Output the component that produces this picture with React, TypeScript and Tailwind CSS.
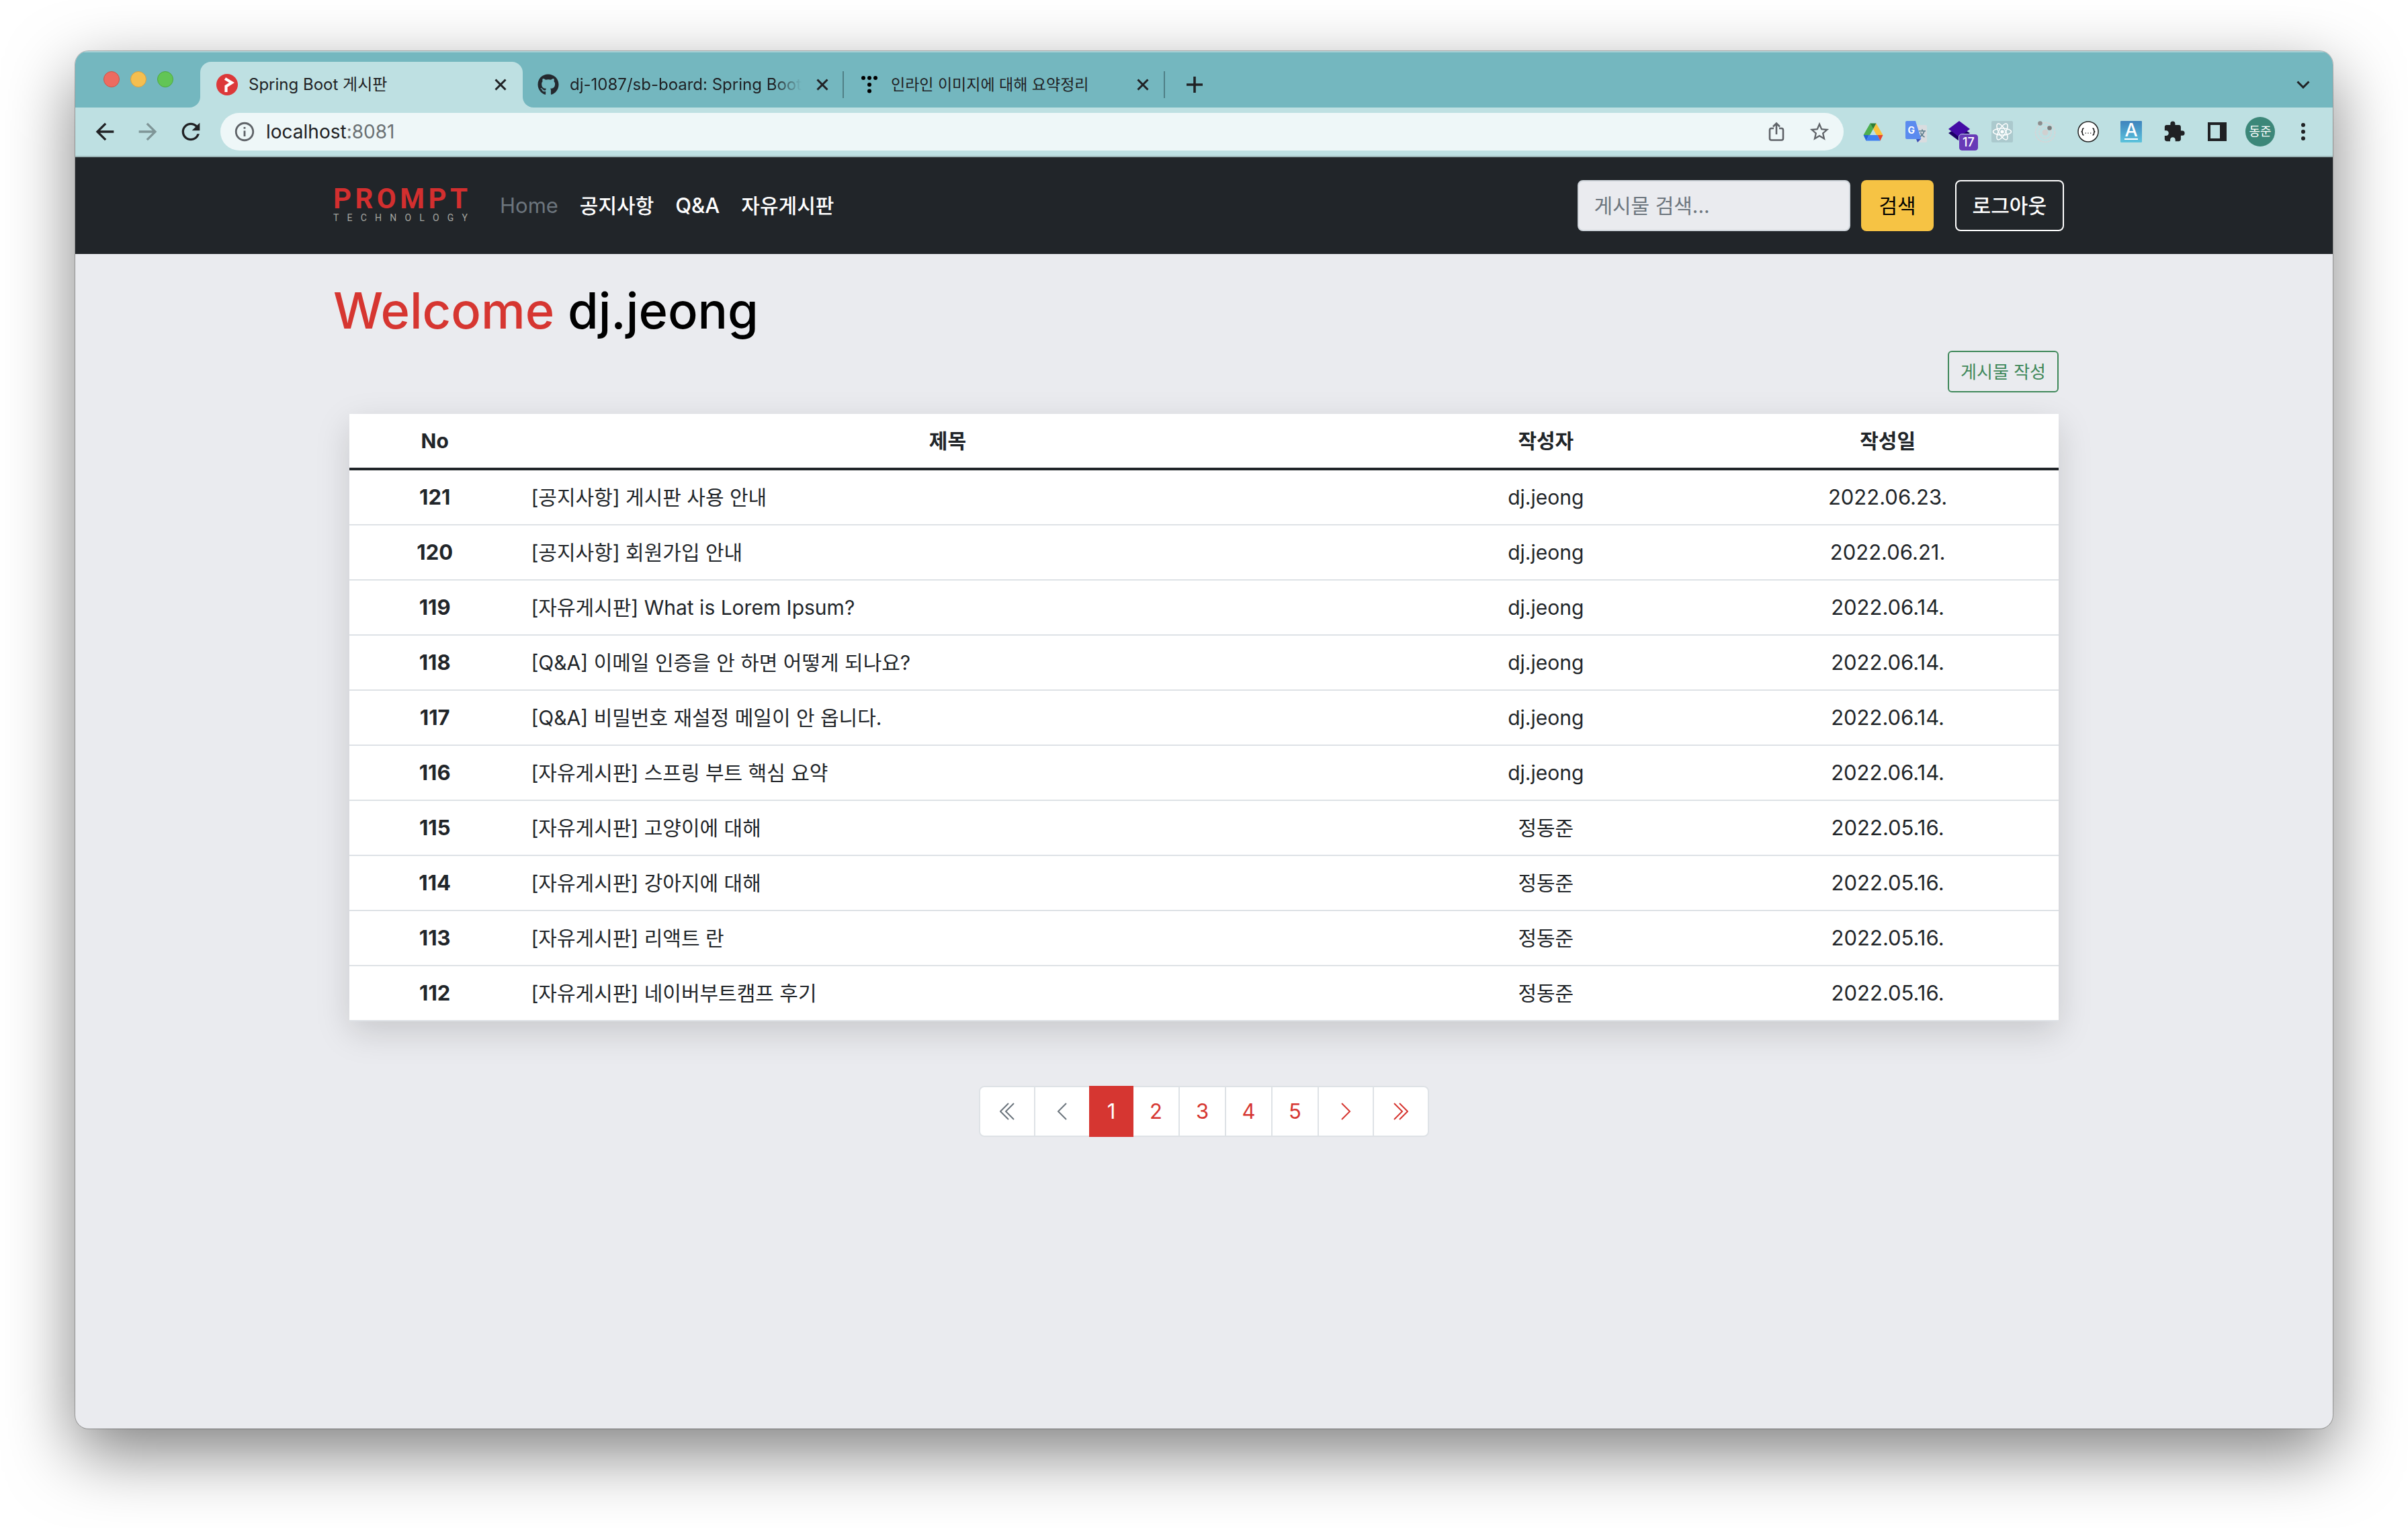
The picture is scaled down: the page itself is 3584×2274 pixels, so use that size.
import type { ReactNode } from "react";
import { FaGithub } from "react-icons/fa";
import {
  MdArrowBack,
  MdArrowForward,
  MdExtension,
  MdInfoOutline,
  MdRefresh,
  MdStarBorder,
} from "react-icons/md";

type Post = { no: number; title: string; author: string; date: string };

const posts: Post[] = [
  { no: 121, title: "[공지사항] 게시판 사용 안내", author: "dj.jeong", date: "2022.06.23." },
  { no: 120, title: "[공지사항] 회원가입 안내", author: "dj.jeong", date: "2022.06.21." },
  { no: 119, title: "[자유게시판] What is Lorem Ipsum?", author: "dj.jeong", date: "2022.06.14." },
  { no: 118, title: "[Q&A] 이메일 인증을 안 하면 어떻게 되나요?", author: "dj.jeong", date: "2022.06.14." },
  { no: 117, title: "[Q&A] 비밀번호 재설정 메일이 안 옵니다.", author: "dj.jeong", date: "2022.06.14." },
  { no: 116, title: "[자유게시판] 스프링 부트 핵심 요약", author: "dj.jeong", date: "2022.06.14." },
  { no: 115, title: "[자유게시판] 고양이에 대해", author: "정동준", date: "2022.05.16." },
  { no: 114, title: "[자유게시판] 강아지에 대해", author: "정동준", date: "2022.05.16." },
  { no: 113, title: "[자유게시판] 리액트 란", author: "정동준", date: "2022.05.16." },
  { no: 112, title: "[자유게시판] 네이버부트캠프 후기", author: "정동준", date: "2022.05.16." },
];

function CloseIcon() {
  return (
    <svg viewBox="0 0 18 18" className="size-[18px]" fill="none" stroke="#202124" strokeWidth="3">
      <path d="M1.5 1.5l15 15M16.5 1.5l-15 15" />
    </svg>
  );
}

function BoardFavicon() {
  return (
    <svg viewBox="0 0 32 32" className="size-8 shrink-0">
      <circle cx="16" cy="16" r="16" fill="#dc3839" />
      <path d="M13 7l10 6-8.500 5.500V27" fill="none" stroke="#fff" strokeWidth="4.200" />
    </svg>
  );
}

function DotsFavicon() {
  return (
    <svg viewBox="0 0 24 26" className="h-[26px] w-6 shrink-0" fill="#000">
      <circle cx="3" cy="3" r="3" />
      <circle cx="12" cy="3" r="3" />
      <circle cx="21" cy="3" r="3" />
      <circle cx="12" cy="13" r="3" />
      <circle cx="12" cy="22.500" r="3" />
    </svg>
  );
}

function ShareIcon() {
  return (
    <svg viewBox="0 0 24 30" className="h-[30px] w-6" fill="none" stroke="#5f6368" strokeWidth="2.600">
      <path d="M8 10H4.500a2.500 2.500 0 0 0-2.500 2.500V25a2.500 2.500 0 0 0 2.500 2.500h15A2.500 2.500 0 0 0 22 25V12.500a2.500 2.500 0 0 0-2.500-2.500H16" />
      <path d="M12 19V3M7 7.500l5-5 5 5" />
    </svg>
  );
}

function DriveIcon() {
  return (
    <svg viewBox="0 0 30 27" className="h-[27px] w-[30px]">
      <path d="M10.500 0.500L0.500 18H10l5-9z" fill="#4caf50" />
      <path d="M19.500 0.500l10 17.500H20l-5-9z" fill="#fbc13c" />
      <path d="M10.500 0.500h9L15 9z" fill="#2e7d32" />
      <path d="M0.500 18H9l-4.500 8.500z" fill="#2563d8" />
      <path d="M9 18h12.500l4 8.500h-21z" fill="#3f7ff0" />
      <path d="M21.500 18h8l-4 8.500z" fill="#e5432e" />
    </svg>
  );
}

function TranslateIcon() {
  return (
    <svg viewBox="0 0 32 32" className="size-8">
      <path d="M12 6h18a2 2 0 0 1 2 2v22a2 2 0 0 1-2 2H18z" fill="#d9dcdf" />
      <path
        d="M20 15h10M25 12.500V15M28 15c-1 4-4 7-7 9M22.500 17c1 3 3 5.500 6 7"
        fill="none"
        stroke="#5b7d8c"
        strokeWidth="1.600"
      />
      <path d="M16 27h7l-5 5z" fill="#3b50b5" />
      <path d="M2 0h13l8.500 27H2a2 2 0 0 1-2-2V2a2 2 0 0 1 2-2z" fill="#5b8bef" />
      <text x="3.500" y="18.500" fontFamily="Inter" fontWeight="700" fontSize="14" fill="#fff">
        G
      </text>
    </svg>
  );
}

function LayersIcon() {
  return (
    <span className="relative block size-8">
      <svg viewBox="0 0 32 32" className="size-8">
        <path d="M0 18l5-3 11 7 11-7 5 3-16 12z" fill="#1d0068" />
        <path d="M16 0l16 12-16 12L0 12z" fill="#440ba5" />
      </svg>
      <span className="absolute top-5 left-4 flex h-6 w-7 items-center justify-center rounded bg-[#673ab7] text-lg leading-6 font-medium text-white outline-1 outline-[#bee0e2]">
        17
      </span>
    </span>
  );
}

function AtomIcon() {
  return (
    <svg viewBox="0 0 32 32" className="size-8" fill="none" stroke="#fff" strokeWidth="1.500">
      <rect width="32" height="32" rx="2" fill="#abc9cd" stroke="none" />
      <ellipse cx="16" cy="16" rx="13.500" ry="5" />
      <ellipse cx="16" cy="16" rx="13.500" ry="5" transform="rotate(60 16 16)" />
      <ellipse cx="16" cy="16" rx="13.500" ry="5" transform="rotate(120 16 16)" />
      <circle cx="16" cy="16" r="2.600" fill="#fff" stroke="none" />
    </svg>
  );
}

function OrbitIcon() {
  return (
    <svg viewBox="0 0 32 32" className="size-8" fill="none" stroke="#d9d3d5" strokeWidth="1.600">
      <circle cx="16" cy="17" r="14.500" strokeDasharray="3 1" />
      <circle cx="16" cy="17" r="9" strokeDasharray="3 1" />
      <circle cx="16" cy="17" r="4.500" fill="#d0d0d0" stroke="none" />
      <circle cx="8.500" cy="3.500" r="3.300" fill="#8d8d8d" stroke="none" />
      <circle cx="22.500" cy="10.500" r="3.300" fill="#7c7c7c" stroke="none" />
    </svg>
  );
}

function BracesIcon() {
  return (
    <svg viewBox="0 0 32 32" className="size-8">
      <circle cx="16" cy="16" r="15" fill="#fff" stroke="#222" strokeWidth="1.500" />
      <path
        d="M9.500 11c-2 0-2 .8-2 2.300 0 1.700-.3 2.700-1.800 2.700 1.500 0 1.800 1 1.800 2.700 0 1.500 0 2.300 2 2.300M22.500 11c2 0 2 .8 2 2.300 0 1.700.3 2.700 1.800 2.700-1.500 0-1.800 1-1.800 2.700 0 1.500 0 2.300-2 2.300"
        fill="none"
        stroke="#111"
        strokeWidth="1.500"
      />
      <path d="M11.700 18.200h1.200M15.400 18.200h1.200M19.100 18.200h1.200" stroke="#111" strokeWidth="1.200" />
    </svg>
  );
}

function LetterIcon() {
  return (
    <span className="flex size-8 flex-col items-center rounded-[1px] bg-linear-to-b from-[#3f83bd] to-[#5cc3dc]">
      <span className="h-[26px] text-[27px] leading-[28px] font-medium text-white">A</span>
      <span className="h-0.5 w-5 bg-white" />
    </span>
  );
}

function SidePanelIcon() {
  return (
    <svg viewBox="0 0 28 28" className="size-7">
      <path d="M0 0h28v28H0zM4 4v20h14V4z" fill="#202124" fillRule="evenodd" />
    </svg>
  );
}

function KebabIcon() {
  return (
    <svg viewBox="0 0 28 28" className="size-7" fill="#202124">
      <circle cx="14" cy="4" r="3" />
      <circle cx="14" cy="14" r="3" />
      <circle cx="14" cy="24" r="3" />
    </svg>
  );
}

function Chevrons({ double = false, right = false }: { double?: boolean; right?: boolean }) {
  const single = right ? "M2 2l12 12L2 26" : "M14 2L2 14l12 12";
  const pair = right ? "M1 2l12 12L1 26M9 2l12 12L9 26" : "M13 2L1 14l12 12M21 2L9 14l12 12";
  return (
    <svg
      viewBox={double ? "0 0 22 28" : "0 0 16 28"}
      className={double ? "h-7 w-[22px]" : "h-7 w-4"}
      fill="none"
      stroke="currentColor"
      strokeWidth="2"
    >
      <path d={double ? pair : single} />
    </svg>
  );
}

function ToolButton({ label, children }: { label: string; children: ReactNode }) {
  return (
    <button type="button" aria-label={label} className="flex h-14 w-16 shrink-0 items-center justify-center">
      {children}
    </button>
  );
}

function TabStrip() {
  return (
    <div className="flex h-21 items-end border-t-2 border-[#a9d3d8] bg-[#74b7bf] pr-3 text-2xl leading-8 text-[#202124]">
      <div className="flex h-20 w-[186px] shrink-0 items-center gap-4 pb-1 pl-[42px]">
        <span className="size-6 rounded-full border border-[#cf5347] bg-[#ed6b60]" />
        <span className="size-6 rounded-full border border-[#d9a03f] bg-[#f5bf4f]" />
        <span className="size-6 rounded-full border border-[#4ea73f] bg-[#62c555]" />
      </div>
      <div className="relative flex h-17 w-[480px] items-center rounded-t-2xl bg-[#bee0e2] pr-6 pl-6">
        <span className="absolute bottom-0 -left-4 size-4 bg-[#bee0e2]">
          <span className="block size-4 rounded-br-2xl bg-[#74b7bf]" />
        </span>
        <span className="absolute -right-4 bottom-0 size-4 bg-[#bee0e2]">
          <span className="block size-4 rounded-bl-2xl bg-[#74b7bf]" />
        </span>
        <BoardFavicon />
        <span className="ml-4 flex-1 truncate">Spring Boot 게시판</span>
        <button type="button" aria-label="탭 닫기">
          <CloseIcon />
        </button>
      </div>
      <div className="flex h-17 w-[476px] items-center pr-[21px] pl-[22px]">
        <FaGithub className="size-8 shrink-0 text-[#24292f]" />
        <span className="ml-4 mask-r-from-88% mask-r-to-100% whitespace-nowrap">
          dj-1087/sb-board: Spring Boot
        </span>
        <button type="button" aria-label="탭 닫기" className="ml-auto">
          <CloseIcon />
        </button>
      </div>
      <div className="flex h-17 w-[480px] items-center">
        <span className="h-10 w-0.5 bg-[#4f7f86]" />
        <span className="ml-[26px]">
          <DotsFavicon />
        </span>
        <span className="ml-5 flex-1 truncate text-[23px]">인라인 이미지에 대해 요약정리</span>
        <button type="button" aria-label="탭 닫기" className="mr-[22px]">
          <CloseIcon />
        </button>
        <span className="h-10 w-0.5 bg-[#4f7f86]" />
      </div>
      <button type="button" aria-label="새 탭" className="flex h-17 w-[88px] items-center justify-center">
        <svg viewBox="0 0 24 24" className="size-6" stroke="#202124" strokeWidth="3.600">
          <path d="M12 0v24M0 12h24" />
        </svg>
      </button>
      <button type="button" aria-label="탭 검색" className="ml-auto flex h-17 w-16 items-center justify-center">
        <svg viewBox="0 0 20 12" className="h-3 w-5" fill="none" stroke="#202124" strokeWidth="3">
          <path d="M1.500 1.500L10 10l8.500-8.500" />
        </svg>
      </button>
    </div>
  );
}

function Toolbar() {
  return (
    <div className="flex h-[74px] items-center border-b-2 border-[#9bb4b6] bg-[#bee0e2] pr-3 pl-3">
      <ToolButton label="뒤로">
        <MdArrowBack className="size-10 text-[#202124]" />
      </ToolButton>
      <ToolButton label="앞으로">
        <MdArrowForward className="size-10 text-[#7f9597]" />
      </ToolButton>
      <ToolButton label="새로고침">
        <MdRefresh className="size-10 text-[#202124]" />
      </ToolButton>
      <div className="ml-3 flex h-14 flex-1 items-center rounded-full bg-[#eef7f8] pr-1 pl-[19px]">
        <MdInfoOutline className="size-[34px] text-[#5f6368]" />
        <span className="ml-[15px] flex-1 text-[28px] leading-10 text-[#202124]">
          localhost<span className="text-[#6b7174]">:8081</span>
        </span>
        <ToolButton label="공유">
          <ShareIcon />
        </ToolButton>
        <ToolButton label="북마크">
          <MdStarBorder className="size-[34px] text-[#5f6368]" />
        </ToolButton>
      </div>
      <div className="ml-3 flex">
        <ToolButton label="Drive">
          <DriveIcon />
        </ToolButton>
        <ToolButton label="번역">
          <TranslateIcon />
        </ToolButton>
        <ToolButton label="레이어">
          <LayersIcon />
        </ToolButton>
        <ToolButton label="React">
          <AtomIcon />
        </ToolButton>
        <ToolButton label="궤도">
          <OrbitIcon />
        </ToolButton>
        <ToolButton label="JSON">
          <BracesIcon />
        </ToolButton>
        <ToolButton label="글꼴">
          <LetterIcon />
        </ToolButton>
        <ToolButton label="확장 프로그램">
          <MdExtension className="size-[34px] text-[#202124]" />
        </ToolButton>
        <ToolButton label="측면 패널">
          <SidePanelIcon />
        </ToolButton>
        <ToolButton label="프로필">
          <span className="flex size-11 items-center justify-center rounded-full bg-[#3c8779] text-lg text-white">
            동준
          </span>
        </ToolButton>
        <ToolButton label="메뉴">
          <KebabIcon />
        </ToolButton>
      </div>
    </div>
  );
}

function Logo() {
  return (
    <a href="/" aria-label="PROMPT TECHNOLOGY" className="block w-[200px] font-[Roboto,sans-serif]">
      <span className="flex justify-between text-[42px] leading-8 font-bold text-[#d32f2f]">
        {["P", "R", "O", "M", "P", "T"].map((letter, i) => (
          <span key={i}>{letter}</span>
        ))}
      </span>
      <span className="mt-1 flex justify-between text-sm leading-4 text-[#a5a5a0]">
        {["T", "E", "C", "H", "N", "O", "L", "O", "G", "Y"].map((letter, i) => (
          <span key={i}>{letter}</span>
        ))}
      </span>
    </a>
  );
}

function Navbar() {
  return (
    <header className="bg-[#212529]">
      <div className="mx-auto flex h-36 max-w-[2640px] items-center pr-10 pl-6">
        <Logo />
        <nav className="ml-12 flex items-center gap-8 leading-12 text-white">
          <a href="/" className="text-[31px] text-[#6c757d]">
            Home
          </a>
          <a href="/notice" className="font-medium">
            공지사항
          </a>
          <a href="/qna" className="text-[31px] font-medium">
            Q&amp;A
          </a>
          <a href="/free" className="font-medium">
            자유게시판
          </a>
        </nav>
        <form className="ml-auto flex items-center" role="search">
          <input
            type="search"
            aria-label="게시물 검색"
            placeholder="게시물 검색..."
            className="h-19 w-[406px] rounded-lg border-2 border-[#ced4da] bg-[#eaebef] px-[22px] placeholder:text-[#6c757d]"
          />
          <button type="button" className="ml-4 h-19 rounded-lg bg-[#f6c344] px-[26px] text-black">
            검색
          </button>
        </form>
        <button type="button" className="ml-8 h-19 rounded-lg border-2 border-white px-6 font-medium text-white">
          로그아웃
        </button>
      </div>
    </header>
  );
}

function PostTable() {
  return (
    <table className="w-full table-fixed border-separate border-spacing-0 bg-white text-center leading-12 shadow-[0_16px_48px_rgba(0,0,0,0.15)]">
      <colgroup>
        <col className="w-[10%]" />
        <col className="w-[50%]" />
        <col className="w-[20%]" />
        <col className="w-[20%]" />
      </colgroup>
      <thead>
        <tr>
          {["No", "제목", "작성자", "작성일"].map((heading) => (
            <th key={heading} scope="col" className="border-b-4 border-[#212529] p-4 font-bold">
              {heading}
            </th>
          ))}
        </tr>
      </thead>
      <tbody>
        {posts.map((post) => (
          <tr key={post.no}>
            <th scope="row" className="border-b-2 border-[#dee2e6] p-4 text-[31px] font-bold">
              {post.no}
            </th>
            <td className="border-b-2 border-[#dee2e6] p-4 text-left">
              <a href={`/posts/${post.no}`}>{post.title}</a>
            </td>
            <td className="border-b-2 border-[#dee2e6] p-4">{post.author}</td>
            <td className="border-b-2 border-[#dee2e6] p-4 text-[31px]">{post.date}</td>
          </tr>
        ))}
      </tbody>
    </table>
  );
}

function Pagination() {
  const cell = "flex h-19 items-center justify-center border-2 border-[#dee2e6] bg-white";
  return (
    <nav aria-label="페이지" className="flex justify-center text-[31px] text-[#d63631]">
      <button type="button" disabled aria-label="처음" className={`${cell} w-21 rounded-l-lg text-[#6c757d]`}>
        <Chevrons double />
      </button>
      <button type="button" disabled aria-label="이전" className={`${cell} -ml-0.5 w-21 text-[#6c757d]`}>
        <Chevrons />
      </button>
      <span
        aria-current="page"
        className="z-10 -ml-0.5 flex h-19 w-[66px] items-center justify-center bg-[#d63631] text-white"
      >
        1
      </span>
      {[2, 3, 4, 5].map((page) => (
        <a key={page} href={`/?page=${page}`} className={`${cell} -ml-0.5 w-[71px]`}>
          {page}
        </a>
      ))}
      <a href="/?page=2" aria-label="다음" className={`${cell} -ml-0.5 w-21`}>
        <Chevrons right />
      </a>
      <a href="/?page=13" aria-label="마지막" className={`${cell} -ml-0.5 w-21 rounded-r-lg`}>
        <Chevrons double right />
      </a>
    </nav>
  );
}

export default function App() {
  return (
    <div className="flex min-h-screen flex-col bg-white px-28 pt-19 pb-37 font-[Inter,'Noto_Sans_CJK_KR',sans-serif] text-[30px] text-[#212529]">
      <div className="flex flex-1 flex-col overflow-hidden rounded-[20px] bg-[#eaebef] shadow-[0_0_0_1px_rgba(0,0,0,0.25),0_36px_100px_rgba(0,0,0,0.5)]">
        <TabStrip />
        <Toolbar />
        <Navbar />
        <main className="mx-auto w-full max-w-[2640px] px-12 pt-9">
          <h1 className="-ml-6 text-[74px] leading-24 font-medium text-black">
            <span className="text-[#d63631]">Welcome</span> dj.jeong
          </h1>
          <div className="mt-3 mb-8 flex justify-end">
            <button type="button" className="h-[62px] rounded-md border-2 border-[#3f885a] px-[17px] text-[26px] text-[#3f885a]">
              게시물 작성
            </button>
          </div>
          <PostTable />
          <div className="mt-24">
            <Pagination />
          </div>
        </main>
      </div>
    </div>
  );
}
